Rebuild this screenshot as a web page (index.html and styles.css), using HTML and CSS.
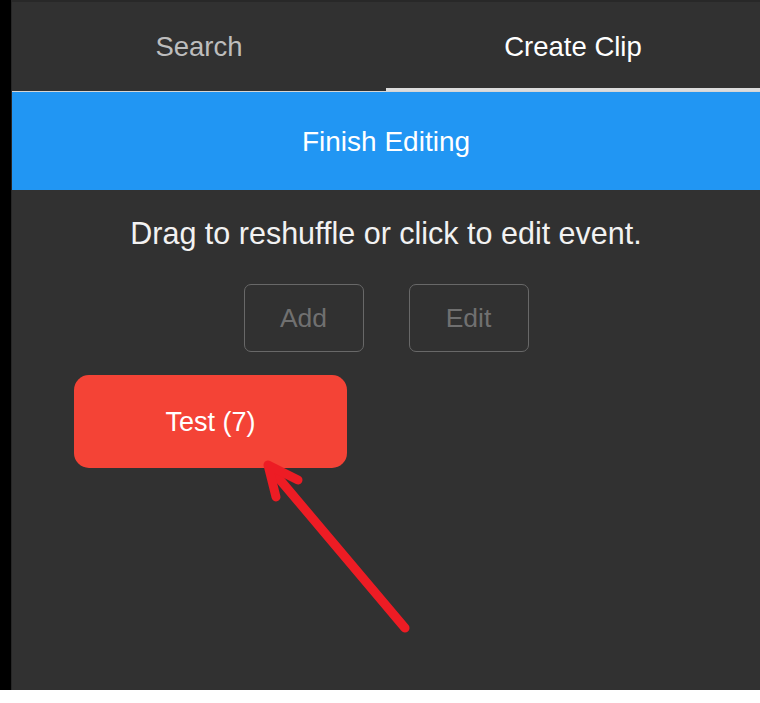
FILE: index.html
```html
<!DOCTYPE html>
<html lang="en">
<head>
<meta charset="utf-8">
<title>Create Clip</title>
<link rel="stylesheet" href="styles.css">
</head>
<body>
<div class="frame">
  <div class="gutter"></div>
  <main class="panel">
    <nav class="tabs">
      <div class="tab">Search</div>
      <div class="tab active">Create Clip</div>
    </nav>
    <div class="finish">Finish Editing</div>
    <p class="hint">Drag to reshuffle or click to edit event.</p>
    <div class="actions">
      <button class="btn">Add</button>
      <button class="btn">Edit</button>
    </div>
    <div class="events">
      <div class="event">Test (7)</div>
    </div>
  </main>
</div>
<svg class="annotation" width="760" height="703" viewBox="0 0 760 703">
  <g fill="none" stroke="#ed1c24" stroke-width="9" stroke-linecap="round" stroke-linejoin="round">
    <line x1="405" y1="628" x2="270" y2="468"/>
    <polyline points="298,480 268,465 276,497"/>
  </g>
</svg>
</body>
</html>
```
FILE: styles.css
```css
html, body {
  margin: 0;
  padding: 0;
  background: #ffffff;
}
body {
  font-family: "Liberation Sans", Arial, sans-serif;
  width: 760px;
  height: 703px;
  overflow: hidden;
  position: relative;
}
.frame {
  display: flex;
  height: 690px;
}
.gutter {
  width: 11px;
  background: #000000;
  flex: none;
}
.panel {
  flex: 1;
  background: #313131;
  border-left: 1px solid #262626;
  border-top: 2px solid #282828;
  display: flex;
  flex-direction: column;
}
.tabs {
  display: flex;
  height: 89px;
  border-bottom: 1px solid #d6d6d6;
}
.tab {
  flex: 1;
  display: flex;
  align-items: center;
  justify-content: center;
  font-size: 27.5px;
  color: #bdbdbd;
  padding-top: 1px;
}
.tab.active {
  color: #ffffff;
  box-shadow: inset 0 -3px 0 #dcdcdc;
}
.finish {
  height: 98px;
  background: #2196f3;
  color: #ffffff;
  font-size: 28px;
  display: flex;
  align-items: center;
  justify-content: center;
  padding-top: 2px;
  box-sizing: border-box;
}
.hint {
  margin: 25px 0 0;
  line-height: 36px;
  font-size: 30.5px;
  text-align: center;
  color: #f2f2f2;
}
.actions {
  display: flex;
  justify-content: center;
  gap: 45px;
  margin-top: 33px;
}
.btn {
  width: 120px;
  height: 68px;
  background: transparent;
  border: 1px solid #686868;
  border-radius: 7px;
  color: #707070;
  font-family: "Liberation Sans", Arial, sans-serif;
  font-size: 26.5px;
  padding: 0;
}
.events {
  padding: 23px 0 0 62px;
}
.event {
  width: 273px;
  height: 93px;
  border-radius: 15px;
  background: #f44336;
  color: #ffffff;
  font-size: 27px;
  display: flex;
  align-items: center;
  justify-content: center;
  padding-top: 1px;
  box-sizing: border-box;
}
.annotation {
  position: absolute;
  left: 0;
  top: 0;
  pointer-events: none;
}
```
